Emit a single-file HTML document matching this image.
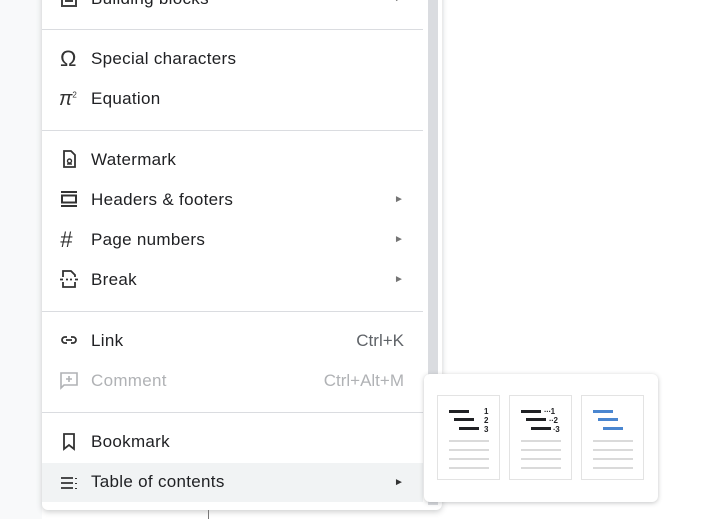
<!DOCTYPE html>
<html><head><style>
body{margin:0;width:722px;height:519px;background:#fff;position:relative;overflow:hidden;font-family:"Liberation Sans",Arial,sans-serif;}
.bgl{position:absolute;left:0;top:0;width:42px;height:519px;background:#f8f9fa}
.menu{position:absolute;left:42px;top:-20px;width:400px;height:530px;background:#fff;border-radius:0 0 6px 6px;box-shadow:0 2px 6px rgba(60,64,67,.25)}
.sb{position:absolute;left:428px;top:0;width:10px;height:505px;background:#dadce0}
.pg{position:absolute;left:443px;top:0;width:1px;height:370px;background:#eceef0}
.div{position:absolute;left:42px;width:381px;height:1px;background:#dadce0}
.it{position:absolute;left:42px;width:381px;height:40px;font-size:17px;color:#202124}
.it .t{position:absolute;left:49px;top:11px;letter-spacing:.3px}
.it .ic{position:absolute;left:17px;top:10px;width:20px;height:20px}
.it .ar{position:absolute;left:352px;top:15px;font-size:10px;color:#757575}
.it .sc{position:absolute;right:19px;top:11px;color:#5f6368}
.dis{color:#b0b2b5}.dis .sc{color:#b0b2b5}
.hl{background:#f1f3f4}
.sub{position:absolute;left:424px;top:374px;width:234px;height:128px;background:#fff;border-radius:6px;box-shadow:0 1px 5px rgba(60,64,67,.3)}
.card{position:absolute;top:21px;width:63px;height:85px;border:1px solid #e3e3e3;box-sizing:border-box}
.ln{position:absolute;height:2px;background:#dadada;left:11px;width:40px}
.dk{position:absolute;height:3px;background:#202124}
.bl{position:absolute;height:3px;background:#4a86d0}
.num{position:absolute;font-size:8px;font-weight:bold;color:#202124;line-height:9px}
</style></head><body>
<div class="bgl"></div>
<div class="menu"></div>
<div class="sb"></div>
<div class="pg"></div>
<div style="position:absolute;left:208px;top:510px;width:1px;height:9px;background:#777"></div>

<div class="it" style="top:-22px"><svg class="ic" viewBox="0 0 20 20"><rect x="3" y="2" width="14" height="16" fill="none" stroke="#444" stroke-width="2"/><path d="M6 10h8M6 13h8" stroke="#444" stroke-width="2"/></svg><span class="t">Building blocks</span><span class="ar">►</span></div>
<div class="div" style="top:29px"></div>
<div class="it" style="top:38px"><span class="ic" style="font-size:22px;top:8px;left:18px;color:#333">Ω</span><span class="t">Special characters</span></div>
<div class="it" style="top:78px"><span class="ic" style="font-size:20px;top:10px;left:17px;font-style:italic;color:#333">π<sup style="font-size:8px;font-style:normal">2</sup></span><span class="t">Equation</span></div>
<div class="div" style="top:130px"></div>
<div class="it" style="top:139px"><svg class="ic" viewBox="0 0 20 20"><path d="M5 2h7l4 4v12H5z" fill="none" stroke="#333" stroke-width="1.8"/><circle cx="10.5" cy="12" r="2" fill="none" stroke="#333" stroke-width="1.4"/><path d="M8 15h5" stroke="#333" stroke-width="1.4"/></svg><span class="t">Watermark</span></div>
<div class="it" style="top:179px"><svg class="ic" viewBox="0 0 20 20"><path d="M2 3h16M2 17h16" stroke="#333" stroke-width="2"/><rect x="3" y="6.5" width="14" height="7" fill="none" stroke="#333" stroke-width="2"/></svg><span class="t">Headers &amp; footers</span><span class="ar">►</span></div>
<div class="it" style="top:219px"><span class="ic" style="font-size:22px;top:8px;left:18px;font-style:italic;color:#333">#</span><span class="t">Page numbers</span><span class="ar">►</span></div>
<div class="it" style="top:259px"><svg class="ic" viewBox="0 0 20 20"><path d="M4 8V2h8l4 4v2M4 13v5h12v-5" fill="none" stroke="#333" stroke-width="1.8"/><path d="M1 10.5h3M7 10.5h2M11 10.5h2M16 10.5h3" stroke="#333" stroke-width="1.8"/></svg><span class="t">Break</span><span class="ar">►</span></div>
<div class="div" style="top:311px"></div>
<div class="it" style="top:320px"><svg class="ic" viewBox="0 0 20 20"><path d="M8 7H6a3 3 0 000 6h2M12 7h2a3 3 0 010 6h-2M7 10h6" fill="none" stroke="#333" stroke-width="1.8"/></svg><span class="t">Link</span><span class="sc">Ctrl+K</span></div>
<div class="it dis" style="top:360px"><svg class="ic" viewBox="0 0 20 20"><path d="M2 3h16v12H5l-3 3z" fill="none" stroke="#b0b2b5" stroke-width="1.6"/><path d="M10 6v6M7 9h6" stroke="#b0b2b5" stroke-width="1.6"/></svg><span class="t">Comment</span><span class="sc">Ctrl+Alt+M</span></div>
<div class="div" style="top:412px"></div>
<div class="it" style="top:421px"><svg class="ic" viewBox="0 0 20 20"><path d="M5 3h10v15l-5-4-5 4z" fill="none" stroke="#333" stroke-width="1.8"/></svg><span class="t">Bookmark</span></div>
<div class="it hl" style="top:463px;height:39px"><svg class="ic" viewBox="0 0 20 20"><path d="M2 5h12M2 10h12M2 15h12" stroke="#333" stroke-width="1.8"/><path d="M17 5v1M17 10v1M17 15v1" stroke="#333" stroke-width="2"/></svg><span class="t" style="top:9px">Table of contents</span><span class="ar" style="color:#333;top:14px">►</span></div>

<div class="sub">
 <div class="card" style="left:13px">
  <div class="dk" style="left:11px;top:14px;width:20px"></div><div class="dk" style="left:16px;top:22px;width:20px"></div><div class="dk" style="left:21px;top:31px;width:20px"></div>
  <div class="num" style="left:46px;top:11px">1</div><div class="num" style="left:46px;top:20px">2</div><div class="num" style="left:46px;top:29px">3</div>
  <div class="ln" style="top:44px"></div><div class="ln" style="top:53px"></div><div class="ln" style="top:62px"></div><div class="ln" style="top:71px"></div>
 </div>
 <div class="card" style="left:85px">
  <div class="dk" style="left:11px;top:14px;width:20px"></div><div class="dk" style="left:16px;top:22px;width:20px"></div><div class="dk" style="left:21px;top:31px;width:20px"></div>
  <div class="num" style="left:34px;top:11px">∙∙∙1</div><div class="num" style="left:39px;top:20px">∙∙2</div><div class="num" style="left:43px;top:29px">∙3</div>
  <div class="ln" style="top:44px"></div><div class="ln" style="top:53px"></div><div class="ln" style="top:62px"></div><div class="ln" style="top:71px"></div>
 </div>
 <div class="card" style="left:157px">
  <div class="bl" style="left:11px;top:14px;width:20px"></div><div class="bl" style="left:16px;top:22px;width:20px"></div><div class="bl" style="left:21px;top:31px;width:20px"></div>
  <div class="ln" style="top:44px"></div><div class="ln" style="top:53px"></div><div class="ln" style="top:62px"></div><div class="ln" style="top:71px"></div>
 </div>
</div>
</body></html>
